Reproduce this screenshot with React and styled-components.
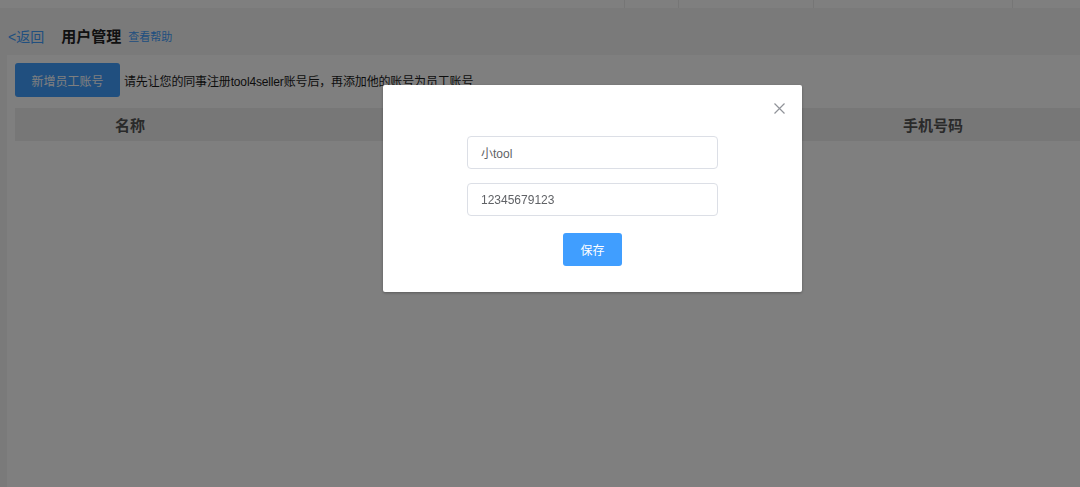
import React from "react";
import styled, { createGlobalStyle } from "styled-components";

const Global = createGlobalStyle`
  html, body { margin: 0; padding: 0; }
  body {
    font-family: "Liberation Sans", "Noto Sans CJK SC", Arial, sans-serif;
    background: #f4f4f4;
    width: 1080px;
    height: 487px;
    overflow: hidden;
  }
`;

const Page = styled.div`
  width: 1080px;
  height: 487px;
  display: flex;
  flex-direction: column;
  background: #f4f4f4;
`;

const TopBar = styled.div`
  height: 8px;
  background: #fefefe;
  display: flex;
  justify-content: flex-end;
  flex-shrink: 0;
`;

const TopCell = styled.div`
  width: ${(p) => p.w}px;
  border-left: 1px solid #ececec;
`;

const Header = styled.div`
  height: 47px;
  display: flex;
  align-items: center;
  padding-left: 8px;
  padding-top: 8px;
  box-sizing: border-box;
`;

const Back = styled.a`
  color: #409eff;
  font-size: 14px;
  margin-right: 17px;
`;

const Title = styled.span`
  font-size: 15px;
  font-weight: bold;
  color: #222;
  margin-right: 7px;
`;

const Help = styled.a`
  font-size: 11px;
  color: #409eff;
`;

const Card = styled.div`
  flex: 1;
  margin-left: 7px;
  background: #ffffff;
  padding: 8px 0 0 8px;
`;

const Toolbar = styled.div`
  display: flex;
  align-items: center;
  height: 34px;
`;

const PrimaryButton = styled.button`
  background: #409eff;
  color: #fff;
  border: none;
  border-radius: 3px;
  font-family: inherit;
  font-size: 12px;
  padding: 0;
  width: ${(p) => p.w}px;
  height: ${(p) => p.h}px;
  cursor: pointer;
`;

const Hint = styled.span`
  font-size: 12px;
  color: #1a1a1a;
  margin-left: 4px;
  letter-spacing: -0.15px;
`;

const TableHead = styled.div`
  margin-top: 11px;
  height: 33px;
  background: #eeeeee;
  display: flex;
  align-items: center;
  color: #555;
  font-size: 15px;
  font-weight: bold;
`;

const Th = styled.div`
  flex: ${(p) => (p.w ? `0 0 ${p.w}px` : 1)};
  text-align: center;
`;

const Overlay = styled.div`
  position: fixed;
  inset: 0;
  background: rgba(0, 0, 0, 0.5);
`;

const Modal = styled.div`
  position: absolute;
  left: 383px;
  top: 85px;
  width: 419px;
  height: 207px;
  background: #fff;
  border-radius: 2px;
  box-shadow: 0 1px 3px rgba(0, 0, 0, 0.3);
  display: flex;
  flex-direction: column;
  align-items: center;
  padding-top: 51px;
  box-sizing: border-box;
`;

const Close = styled.button`
  position: absolute;
  right: 16px;
  top: 16px;
  background: none;
  border: none;
  padding: 0;
  width: 14px;
  height: 14px;
  display: flex;
  align-items: center;
  justify-content: center;
`;

const Input = styled.input`
  width: 251px;
  height: 33px;
  box-sizing: border-box;
  border: 1px solid #dcdfe6;
  border-radius: 4px;
  padding: 0 13px;
  font-family: inherit;
  font-size: 12px;
  color: #606266;
  margin-bottom: 14px;
  outline: none;
`;

const SaveButton = styled(PrimaryButton)`
  margin-top: 3px;
`;

export default function App() {
  return (
    <>
      <Global />
      <Page>
        <TopBar>
          <TopCell w={53} />
          <TopCell w={134} />
          <TopCell w={198} />
          <TopCell w={67} />
        </TopBar>
        <Header>
          <Back>&lt;返回</Back>
          <Title>用户管理</Title>
          <Help>查看帮助</Help>
        </Header>
        <Card>
          <Toolbar>
            <PrimaryButton w={105} h={34}>新增员工账号</PrimaryButton>
            <Hint>请先让您的同事注册tool4seller账号后，再添加他的账号为员工账号</Hint>
          </Toolbar>
          <TableHead>
            <Th w={230}>名称</Th>
            <Th></Th>
            <Th w={294}>手机号码</Th>
          </TableHead>
        </Card>
      </Page>
      <Overlay>
        <Modal>
          <Close aria-label="close">
            <svg width="11" height="11" viewBox="0 0 11 11">
              <path d="M0.5 0.5 L10.5 10.5 M10.5 0.5 L0.5 10.5" stroke="#909399" strokeWidth="1.2" />
            </svg>
          </Close>
          <Input defaultValue="小tool" />
          <Input defaultValue="12345679123" />
          <SaveButton w={59} h={33}>保存</SaveButton>
        </Modal>
      </Overlay>
    </>
  );
}
